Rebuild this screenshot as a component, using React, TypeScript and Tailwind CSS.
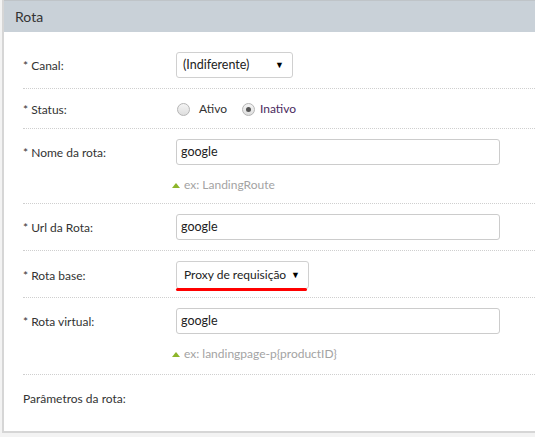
import React from "react";

const font = { fontFamily: "Lato, 'Open Sans', sans-serif" };

function Row({ label, children, pt = "pt-[10px]", pb = "pb-[10px]", lh = "h-[26px]", last }: { label: string; children: React.ReactNode; pt?: string; pb?: string; lh?: string; last?: boolean }) {
  return (
    <div className={`shrink-0 ml-[19px] flex items-start ${last ? "" : "border-b border-dotted border-[#cfcfcf]"} ${pt} ${pb}`}>
      <div className={`w-[153px] shrink-0 flex items-center ${lh} pt-[2px] text-[12px] text-[#333]`}>{label}</div>
      <div className="flex flex-col">{children}</div>
    </div>
  );
}

function Input({ value }: { value: string }) {
  return (
    <div className="w-[324px] h-[26px] border border-[#cccccc] rounded-[3px] bg-white flex items-center pl-[4px] text-[12.5px] text-[#222]">
      {value}
    </div>
  );
}

function Help({ text }: { text: string }) {
  return (
    <div className="flex items-center h-[16px] mt-[12px] text-[12px] text-[#a3a3a3] whitespace-nowrap">
      <span className="ml-[-4px] mr-[4px] w-0 h-0 border-l-[4px] border-r-[4px] border-b-[5px] border-l-transparent border-r-transparent border-b-[#8db52a]" />
      {text}
    </div>
  );
}

function Select({ value, w, h, pl, size }: { value: string; w: string; h: string; pl: string; size: string }) {
  return (
    <div className={`${w} ${h} border border-[#d0d0d0] rounded-[3px] bg-white flex items-center justify-between ${pl} pr-[8px] ${size} text-[#222] whitespace-nowrap`}>
      <span>{value}</span>
      <span className="text-[9px] text-black">▼</span>
    </div>
  );
}

function Radio({ checked }: { checked?: boolean }) {
  return (
    <span className="w-[13px] h-[13px] rounded-full border border-[#b5b5b5] bg-gradient-to-b from-[#f4f4f4] to-[#dedede] flex items-center justify-center">
      {checked && <span className="w-[5px] h-[5px] rounded-full bg-[#555]" />}
    </span>
  );
}

export default function App() {
  return (
    <div className="w-[535px] h-[437px] bg-[#f3f3f3] overflow-hidden" style={font}>
      <div className="ml-[2px] h-[433px] border-l-2 border-b-2 border-[#d6d6d6] bg-white flex flex-col overflow-hidden">
        <div className="shrink-0 h-[32px] bg-[#c9d1d8] border-t border-[#bfc4c8] flex items-center pl-[11px] text-[14px] text-[#333]">
          Rota
        </div>
        <Row label="* Canal:" pt="pt-[20px]">
          <Select value="(Indiferente)" w="w-[117px]" h="h-[26px]" pl="pl-[6px]" size="text-[12.5px]" />
        </Row>
        <Row label="* Status:" lh="h-[19px]">
          <div className="h-[19px] pt-[1px] flex items-center text-[12px] text-[#333]">
            <span className="ml-[1px]"><Radio /></span>
            <span className="ml-[9px]">Ativo</span>
            <span className="ml-[15px]"><Radio checked /></span>
            <span className="ml-[5px] text-[#4b2a5e]">Inativo</span>
          </div>
        </Row>
        <Row label="* Nome da rota:">
          <Input value="google" />
          <Help text="ex: LandingRoute" />
        </Row>
        <Row label="* Url da Rota:">
          <Input value="google" />
        </Row>
        <Row label="* Rota base:" lh="h-[28px]" pb="pb-[6px]">
          <div className="flex flex-col">
            <Select value="Proxy de requisição" w="w-[133px]" h="h-[28px]" pl="pl-[7px]" size="text-[12px]" />
            <div className="w-[131px] h-[3px] bg-[#ff0000] rounded-full mt-[-1px]" />
          </div>
        </Row>
        <Row label="* Rota virtual:" pb="pb-[12px]">
          <Input value="google" />
          <Help text="ex: landingpage-p{productID}" />
        </Row>
        <Row label="Parâmetros da rota:" last>
          <div />
        </Row>
      </div>
    </div>
  );
}
